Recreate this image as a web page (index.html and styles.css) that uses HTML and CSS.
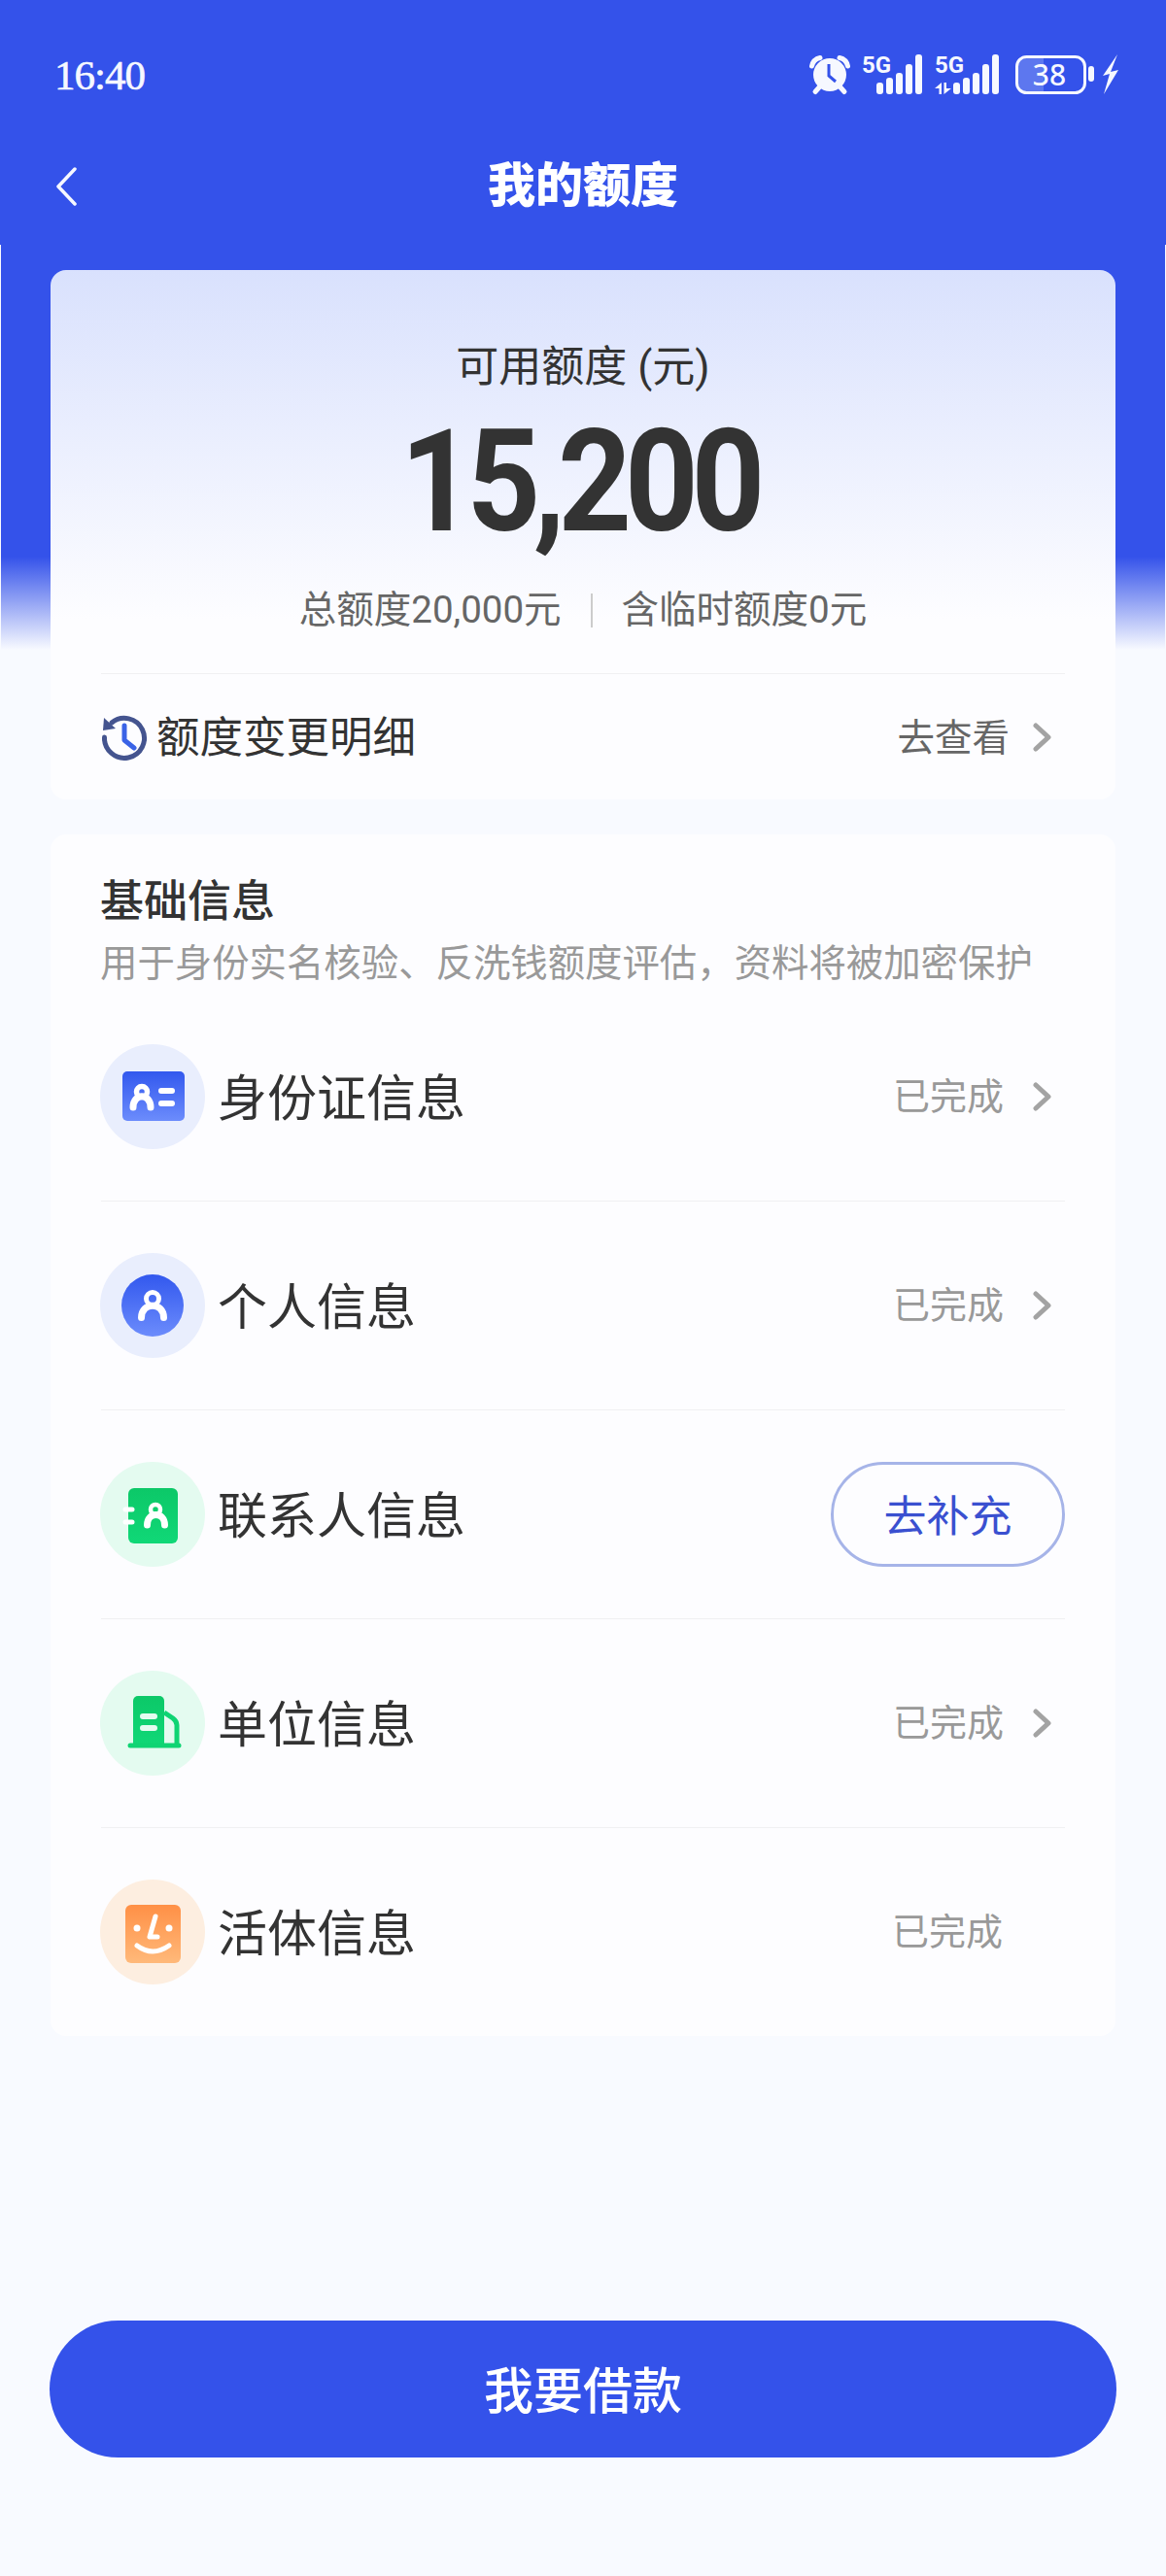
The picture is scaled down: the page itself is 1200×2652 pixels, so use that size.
FILE: index.html
```html
<!doctype html>
<html lang="zh-CN">
  <head>
    <meta charset="UTF-8" />
    <meta name="viewport" content="width=device-width, initial-scale=1.0" />
    <title>我的额度</title>
    <link rel="stylesheet" href="styles.css">
  </head>
  <body>
    <div class="page">
      <header class="top">
        <div class="statusbar">
          <span class="time">16:40</span>
          <div class="status-icons">
            <svg class="alarm" width="42" height="42" viewBox="0 0 42 42">
              <circle cx="21" cy="21" r="17" fill="#f6f8ff" />
              <path d="M2.5 12Q4 5 11 3.5M39.5 12Q38 5 31 3.5" fill="none" stroke="#f6f8ff" stroke-width="5" stroke-linecap="round" />
              <path d="M10 34L6 38.5M32 34L36 38.5" fill="none" stroke="#f6f8ff" stroke-width="5" stroke-linecap="round" />
              <path d="M20 10V22L27 28" fill="none" stroke="#3452ea" stroke-width="3" />
            </svg>
            <svg width="62" height="42" viewBox="0 0 62 42">
              <text class="net" x="0" y="19">5G</text>
              <rect class="bar" x="15" y="29" width="7" height="12" rx="3" />
              <rect class="bar" x="25" y="24" width="7" height="17" rx="3" />
              <rect class="bar" x="35" y="19" width="7" height="22" rx="3" />
              <rect class="bar" x="45" y="10" width="7" height="31" rx="3" />
              <rect class="bar" x="55" y="0" width="7" height="41" rx="3" />
            </svg>
            <svg width="66" height="42" viewBox="0 0 66 42">
              <text class="net" x="0" y="19">5G</text>
              <path d="M0 35L7 29V41H4.5V35ZM9.5 29V41L17 35H12V29Z" fill="#f6f8ff" />
              <rect class="bar" x="19" y="29" width="7" height="12" rx="3" />
              <rect class="bar" x="29" y="24" width="7" height="17" rx="3" />
              <rect class="bar" x="39" y="19" width="7" height="22" rx="3" />
              <rect class="bar" x="49" y="10" width="7" height="31" rx="3" />
              <rect class="bar" x="59" y="0" width="7" height="41" rx="3" />
            </svg>
            <svg class="battery" width="81" height="42" viewBox="0 0 81 42">
              <path d="M12 3H29V39H12A9 9 0 0 1 3 30V12A9 9 0 0 1 12 3Z" fill="#5d77ef" />
              <rect x="1.5" y="2.5" width="70" height="37" rx="10" fill="none" stroke="#f6f8ff" stroke-width="3" />
              <text class="battery-num" x="35" y="32" text-anchor="middle">38</text>
              <rect class="bar" x="75" y="12" width="6" height="16" rx="3" />
            </svg>
            <svg class="bolt" width="18" height="42" viewBox="0 0 18 42">
              <polygon points="16,0 1,22 8,20 2,41 17,16 9,18" fill="#f6f8ff" />
            </svg>
          </div>
        </div>
        <nav class="navbar">
          <svg class="back" width="22" height="40" viewBox="0 0 22 40">
            <path d="M20 2L3 20L20 38" fill="none" stroke="#f6f8ff" stroke-width="3.5" stroke-linecap="round" stroke-linejoin="round" />
          </svg>
          <h1>我的额度</h1>
        </nav>
      </header>

      <main class="content">
        <section class="card quota">
          <p class="quota-label">可用额度 (元)</p>
          <p class="quota-num">15,200</p>
          <p class="quota-sub">
            <span>总额度20,000元</span>
            <i class="split"></i>
            <span>含临时额度0元</span>
          </p>
          <div class="history">
            <div class="history-name">
              <svg width="48" height="48" viewBox="0 0 48 48">
                <path d="M11 9A20.5 20.5 0 1 1 3.5 24" fill="none" stroke="#44548f" stroke-width="5" stroke-linecap="round" />
                <polygon points="3,4 2,17 15,15" fill="#44548f" />
                <path d="M24 12V27L34 35" fill="none" stroke="#3a63e6" stroke-width="5" stroke-linecap="round" stroke-linejoin="round" />
              </svg>
              <span class="history-text">额度变更明细</span>
            </div>
            <div class="row-end row-end-link">
              <span class="history-link">去查看</span>
              <svg class="chev" width="19" height="30" viewBox="0 0 19 30">
                <path d="M3 3L16 15L3 27" />
              </svg>
            </div>
          </div>
        </section>

        <section class="card info">
          <h2>基础信息</h2>
          <p class="info-sub">用于身份实名核验、反洗钱额度评估，资料将被加密保护</p>
          <ul class="info-list">
            <li class="info-row">
              <div class="info-name">
                <span class="badge badge-blue">
                  <svg width="108" height="108" viewBox="0 0 108 108">
                    <defs>
                      <linearGradient id="blueGrad" x1="0" y1="0" x2="0" y2="1">
                        <stop offset="0" stop-color="#3258ee" />
                        <stop offset="1" stop-color="#6c8cfc" />
                      </linearGradient>
                      <linearGradient id="greenGrad" x1="0" y1="0" x2="0" y2="1">
                        <stop offset="0" stop-color="#0cc868" />
                        <stop offset="1" stop-color="#10d877" />
                      </linearGradient>
                      <linearGradient id="orangeGrad" x1="0" y1="0" x2="0" y2="1">
                        <stop offset="0" stop-color="#ff9046" />
                        <stop offset="1" stop-color="#ffb97a" />
                      </linearGradient>
                    </defs>
                    <rect x="23" y="28" width="64" height="51" rx="5" fill="url(#blueGrad)" />
                    <circle cx="43" cy="49" r="5.5" fill="none" stroke="#fff" stroke-width="5.5" />
                    <path d="M34 65C34 50 52 50 52 65" fill="none" stroke="#fff" stroke-width="7" stroke-linecap="round" />
                    <path d="M63 48H74M63 61H74" fill="none" stroke="#fff" stroke-width="6" stroke-linecap="round" />
                  </svg>
                </span>
                <span class="info-label">身份证信息</span>
              </div>
              <div class="row-end">
                <span class="done">已完成</span>
                <svg class="chev" width="19" height="30" viewBox="0 0 19 30">
                  <path d="M3 3L16 15L3 27" />
                </svg>
              </div>
            </li>
            <li class="info-row">
              <div class="info-name">
                <span class="badge badge-blue">
                  <svg width="108" height="108" viewBox="0 0 108 108">
                    <circle cx="54" cy="54" r="32" fill="url(#blueGrad)" />
                    <circle cx="54" cy="47" r="6.5" fill="none" stroke="#fff" stroke-width="5" />
                    <path d="M42.5 66.5C42.5 50 65.5 50 65.5 66.5" fill="none" stroke="#fff" stroke-width="7" stroke-linecap="round" />
                  </svg>
                </span>
                <span class="info-label">个人信息</span>
              </div>
              <div class="row-end">
                <span class="done">已完成</span>
                <svg class="chev" width="19" height="30" viewBox="0 0 19 30">
                  <path d="M3 3L16 15L3 27" />
                </svg>
              </div>
            </li>
            <li class="info-row">
              <div class="info-name">
                <span class="badge badge-green">
                  <svg width="108" height="108" viewBox="0 0 108 108">
                    <rect x="29" y="27" width="51" height="57" rx="6" fill="url(#greenGrad)" />
                    <path d="M26 49H33M26 62H33" fill="none" stroke="#fff" stroke-width="5" stroke-linecap="round" />
                    <circle cx="57" cy="49" r="5" fill="none" stroke="#fff" stroke-width="4.5" />
                    <path d="M48.5 65C48.5 51 66.5 51 66.5 65" fill="none" stroke="#fff" stroke-width="7" stroke-linecap="round" />
                  </svg>
                </span>
                <span class="info-label">联系人信息</span>
              </div>
              <button class="fill-btn">去补充</button>
            </li>
            <li class="info-row">
              <div class="info-name">
                <span class="badge badge-green">
                  <svg width="108" height="108" viewBox="0 0 108 108">
                    <path d="M39 26H61A5 5 0 0 1 66 31V77H34V31A5 5 0 0 1 39 26Z" fill="url(#greenGrad)" />
                    <path d="M66 43L75 49Q79 52 79 56V77" fill="none" stroke="#0fd473" stroke-width="5" />
                    <path d="M31 77H81" fill="none" stroke="#0fd473" stroke-width="5" stroke-linecap="round" />
                    <path d="M44 47H56M44 59H56" fill="none" stroke="#e4fbf0" stroke-width="6" stroke-linecap="round" />
                  </svg>
                </span>
                <span class="info-label">单位信息</span>
              </div>
              <div class="row-end">
                <span class="done">已完成</span>
                <svg class="chev" width="19" height="30" viewBox="0 0 19 30">
                  <path d="M3 3L16 15L3 27" />
                </svg>
              </div>
            </li>
            <li class="info-row">
              <div class="info-name">
                <span class="badge badge-orange">
                  <svg width="108" height="108" viewBox="0 0 108 108">
                    <rect x="26" y="26" width="57" height="60" rx="6" fill="url(#orangeGrad)" />
                    <circle cx="38" cy="50" r="3.5" fill="#fff" />
                    <circle cx="71" cy="50" r="3.5" fill="#fff" />
                    <path d="M57 38L51 59H59" fill="none" stroke="#fff" stroke-width="5" stroke-linecap="round" stroke-linejoin="round" />
                    <path d="M38 68Q54 80 71 68" fill="none" stroke="#fff" stroke-width="5" stroke-linecap="round" />
                  </svg>
                </span>
                <span class="info-label">活体信息</span>
              </div>
              <div class="row-end row-end-plain">
                <span class="done">已完成</span>
              </div>
            </li>
          </ul>
        </section>

        <button class="borrow-btn">我要借款</button>
      </main>
    </div>
  </body>
</html>
```

FILE: styles.css
```css
:root {
  --primary-color: #3452ea;
  --page-bg: #f8faff;
  --border-color: #f0f0f2;
  --text-color: #333;
  --text-mid: #666;
  --text-light: #999;
}

* {
  margin: 0;
  padding: 0;
  box-sizing: border-box;
}

body {
  font-family: Roboto, 'Noto Sans CJK SC', sans-serif;
  color: var(--text-color);
  background-color: var(--page-bg);
}

.page {
  width: 1200px;
  height: 2652px;
  background: linear-gradient(var(--primary-color) 573px, var(--page-bg) 669px);
}

.top {
  padding: 56px 48px 20px 57px;
  color: #f6f8ff;
}

.statusbar {
  display: flex;
  justify-content: space-between;
  align-items: center;
  height: 42px;
}

.time {
  margin-left: -1px;
  font-family: 'Liberation Serif', serif;
  font-size: 43px;
  letter-spacing: -1px;
  -webkit-text-stroke: 0.6px #f6f8ff;
}

.status-icons {
  display: flex;
  align-items: center;
  gap: 13px;
}

.status-icons svg {
  overflow: visible;
}

.alarm {
  margin-right: -1px;
}

.battery {
  margin-left: 4px;
}

.bolt {
  margin-left: -5px;
}

.net {
  font-family: Roboto, sans-serif;
  font-size: 24px;
  font-weight: 700;
  fill: #f6f8ff;
}

.bar {
  fill: #f6f8ff;
}

.battery-num {
  font-family: 'Noto Sans', sans-serif;
  font-size: 30px;
  font-weight: 500;
  fill: #f6f8ff;
}

.navbar {
  display: grid;
  grid-template-columns: 1fr auto 1fr;
  align-items: center;
  height: 80px;
  margin-top: 54px;
  margin-right: -48px;
  padding-right: 57px;
}

.navbar h1 {
  font-size: 49px;
  line-height: 80px;
  font-weight: 900;
  color: #fff;
}

.content {
  padding: 26px 51px 0;
  border-left: 1px solid var(--page-bg);
  border-right: 1px solid var(--page-bg);
}

.card {
  background-color: #fdfdff;
  border-radius: 16px;
}

.quota {
  padding: 74px 52px 0;
  text-align: center;
  background: linear-gradient(#d9e1fd, #fdfdff 360px);
}

.quota-label {
  font-size: 44px;
  line-height: 52px;
}

.quota-num {
  margin-top: 20px;
  margin-right: 8px;
  font-size: 146px;
  line-height: 146px;
  font-weight: 700;
  letter-spacing: -8px;
  transform: scaleX(0.905);
}

.quota-sub {
  display: flex;
  justify-content: center;
  align-items: center;
  gap: 30px;
  margin-top: 33px;
  font-size: 38.5px;
  line-height: 50px;
  color: var(--text-mid);
}

.split {
  width: 2px;
  height: 35px;
  background-color: #ccc;
}

.history {
  display: flex;
  justify-content: space-between;
  align-items: center;
  height: 130px;
  margin-top: 40px;
  border-top: 1px solid var(--border-color);
}

.history-name {
  display: flex;
  align-items: center;
  gap: 9px;
  font-size: 44.5px;
}

.history-text {
  padding-bottom: 6px;
}

.history-link {
  padding-bottom: 6px;
  font-size: 38.5px;
  color: var(--text-mid);
}

.row-end {
  display: flex;
  align-items: center;
  gap: 30px;
  padding-right: 14px;
}

.row-end-link {
  gap: 24px;
}

.row-end-plain {
  padding-right: 64px;
}

.chev {
  flex: none;
}

.chev path {
  fill: none;
  stroke: #a3a3a3;
  stroke-width: 5;
  stroke-linecap: round;
  stroke-linejoin: round;
}

.info {
  margin-top: 36px;
  padding: 44px 52px 0;
  height: 1237px;
}

.info h2 {
  margin-left: -1px;
  padding-top: 3px;
  font-size: 45px;
  line-height: 46px;
  font-weight: 500;
}

.info-sub {
  margin-top: 15px;
  margin-left: -1px;
  font-size: 38.4px;
  line-height: 50px;
  white-space: nowrap;
  color: var(--text-light);
}

.info-list {
  margin-top: 5px;
  list-style: none;
}

.info-row {
  display: flex;
  justify-content: space-between;
  align-items: center;
  height: 215px;
  border-bottom: 1px solid var(--border-color);
}

.info-row:last-child {
  height: 214px;
  border-bottom: none;
}

.info-name {
  display: flex;
  align-items: center;
  gap: 13px;
  font-size: 51px;
}

.info-label {
  padding-bottom: 4px;
}

.badge {
  display: block;
  width: 108px;
  height: 108px;
  margin-left: -1px;
  border-radius: 50%;
}

.badge svg {
  display: block;
}

.badge-blue {
  background-color: #e9eefd;
}

.badge-green {
  background-color: #e4fbf0;
}

.badge-orange {
  background-color: #fdeee0;
}

.done {
  padding-bottom: 7px;
  font-size: 38px;
  color: var(--text-light);
}

.fill-btn {
  width: 241px;
  height: 108px;
  padding-bottom: 2px;
  font: inherit;
  font-size: 44px;
  color: #3a50d0;
  background: transparent;
  border: 3px solid #a6b4e8;
  border-radius: 54px;
}

.borrow-btn {
  display: block;
  width: 1098px;
  height: 141px;
  margin: 293px 0 0 -1px;
  padding-bottom: 4px;
  font: inherit;
  font-size: 51px;
  font-weight: 500;
  color: #fff;
  background-color: var(--primary-color);
  border: none;
  border-radius: 71px;
}
```
